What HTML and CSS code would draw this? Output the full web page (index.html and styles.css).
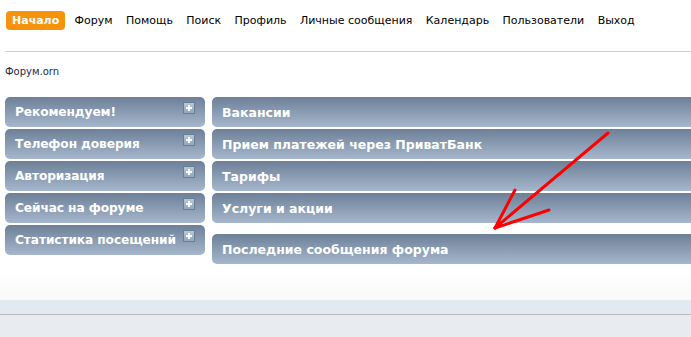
FILE: index.html
```html
<!DOCTYPE html>
<html lang="ru">
<head>
<meta charset="utf-8">
<title>Форум</title>
<link rel="stylesheet" href="styles.css">
</head>
<body>
<div class="page">
  <nav class="topnav">
    <a class="nav-item active" href="#">Начало</a>
    <a class="nav-item" href="#">Форум</a>
    <a class="nav-item" href="#">Помощь</a>
    <a class="nav-item" href="#">Поиск</a>
    <a class="nav-item" href="#">Профиль</a>
    <a class="nav-item" href="#">Личные сообщения</a>
    <a class="nav-item" href="#">Календарь</a>
    <a class="nav-item" href="#">Пользователи</a>
    <a class="nav-item" href="#">Выход</a>
  </nav>
  <div class="rule"></div>
  <div class="crumb">Форум.orn</div>
  <div class="main">
    <div class="left-col">
      <div class="box"><span>Рекомендуем!</span><i class="plus"></i></div>
      <div class="box"><span>Телефон доверия</span><i class="plus"></i></div>
      <div class="box"><span>Авторизация</span><i class="plus"></i></div>
      <div class="box"><span>Сейчас на форуме</span><i class="plus"></i></div>
      <div class="box"><span>Статистика посещений</span><i class="plus"></i></div>
    </div>
    <div class="right-col">
      <div class="rbox">Вакансии</div>
      <div class="rbox">Прием платежей через ПриватБанк</div>
      <div class="rbox">Тарифы</div>
      <div class="rbox">Услуги и акции</div>
      <div class="rbox spaced">Последние сообщения форума</div>
    </div>
  </div>
  <div class="footer">
    <div class="footer-fade"></div>
    <div class="footer-band"></div>
    <div class="footer-base"></div>
  </div>
  <svg class="arrow" width="691" height="337" viewBox="0 0 691 337">
    <g stroke="#ff0000" stroke-width="3" stroke-linecap="round" fill="none">
      <line x1="608" y1="133" x2="495" y2="228"/>
      <line x1="515" y1="190" x2="495" y2="228"/>
      <line x1="549" y1="210" x2="495" y2="228"/>
    </g>
  </svg>
</div>
</body>
</html>
```

FILE: styles.css
```css
html, body {
  margin: 0;
  padding: 0;
  background: #ffffff;
  overflow: hidden;
}

.page {
  position: relative;
  width: 691px;
  height: 337px;
  font-family: "DejaVu Sans", Verdana, sans-serif;
}

.topnav {
  display: flex;
  align-items: center;
  gap: 13.4px;
  padding: 11px 0 0 6px;
  height: 19px;
}

.nav-item {
  font-size: 11px;
  color: #000000;
  text-decoration: none;
  line-height: 19px;
}

.nav-item.active {
  background: #f7930a;
  color: #ffffff;
  font-weight: bold;
  font-size: 11px;
  padding: 0 6px;
  border-radius: 4px;
  margin-right: -4px;
}

.rule {
  margin: 21px 0 0 5px;
  border-top: 1px solid #cfcfcf;
}

.crumb {
  margin: 14px 0 0 5px;
  font-size: 10px;
  color: #1d2a4c;
  line-height: 12px;
}

.main {
  display: flex;
  gap: 7px;
  margin: 19px 0 0 5px;
}

.left-col {
  width: 200px;
  display: flex;
  flex-direction: column;
  gap: 2px;
}

.right-col {
  flex: 1;
  display: flex;
  flex-direction: column;
  gap: 2px;
}

.box, .rbox {
  height: 30px;
  box-sizing: border-box;
  background: linear-gradient(#6d8097, #a6b7cd);
  color: #ffffff;
  font-weight: bold;
  font-size: 12.5px;
  display: flex;
  align-items: center;
  padding-left: 10px;
}

.box {
  border-radius: 5px;
  padding-right: 10px;
  font-size: 12.2px;
  letter-spacing: -0.1px;
}

.rbox {
  border-radius: 5px 0 0 5px;
}

.rbox.spaced {
  margin-top: 9px;
}

.plus {
  position: relative;
  width: 12px;
  height: 12px;
  box-sizing: border-box;
  border: 1px solid #6a7d94;
  background: linear-gradient(#b9c7d8, #94a7be);
  align-self: flex-start;
  margin-top: 5px;
  margin-left: auto;
  flex: none;
}

.plus::before, .plus::after {
  content: "";
  position: absolute;
  background: #ffffff;
}

.plus::before {
  left: 2px;
  top: 4px;
  width: 6px;
  height: 2px;
}

.plus::after {
  left: 4px;
  top: 2px;
  width: 2px;
  height: 6px;
}

.footer {
  margin-top: 9px;
}

.footer-fade {
  height: 27px;
  background: linear-gradient(#ffffff, #f9f9f9);
}

.footer-band {
  height: 14px;
  background: #e3e9f1;
  border-bottom: 1px solid #b6babe;
}

.footer-base {
  height: 30px;
  background: #e8ecf0;
}

.arrow {
  position: absolute;
  left: 0;
  top: 0;
  pointer-events: none;
}
```
